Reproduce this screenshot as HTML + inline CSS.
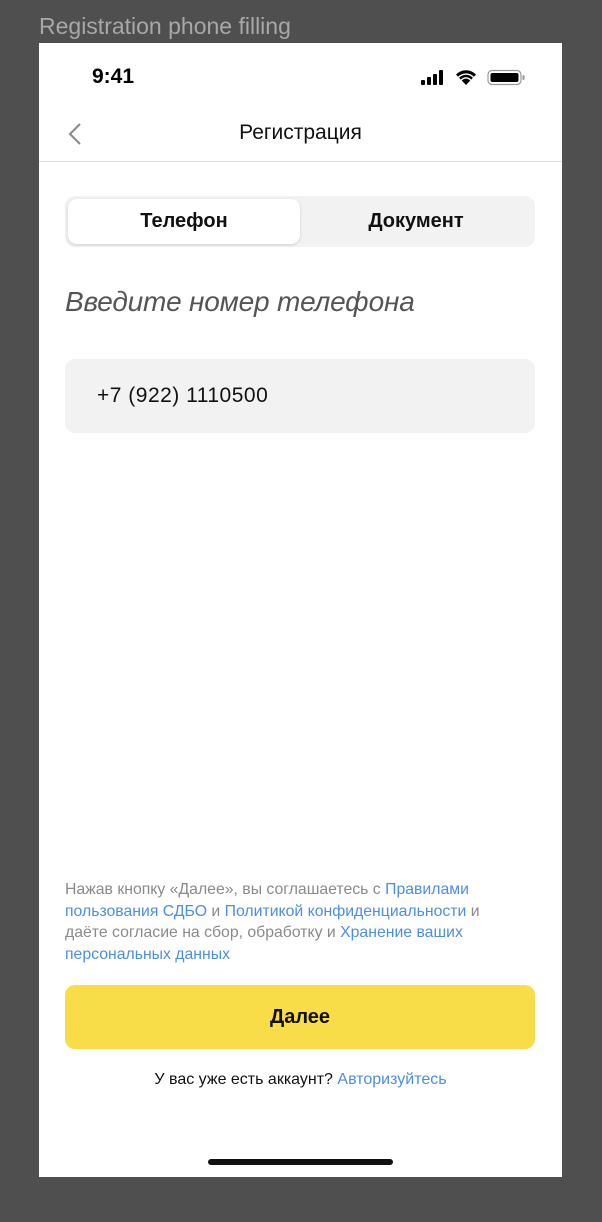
<!DOCTYPE html>
<html><head><meta charset="utf-8"><style>
*{margin:0;padding:0;box-sizing:border-box}
body{width:602px;height:1222px;background:#4f4f4f;position:relative;font-family:"Liberation Sans","DejaVu Sans",sans-serif;overflow:hidden}
.abs{position:absolute}
.title{left:39px;top:13px;color:#a8a8a8;font-size:23px}
.phone{left:39px;top:43px;width:523px;height:1134px;background:#fff}
.time{left:53px;top:22px;font-size:21px;font-weight:bold;color:#000}
.hdr{left:0;width:523px;top:78px;text-align:center;font-size:21px;color:#111}
.line{left:0;top:118px;width:523px;height:1px;background:#ddd}
.seg{left:26px;top:153px;width:470px;height:51px;background:#f2f2f2;border-radius:10px}
.seg .on{position:absolute;left:3px;top:3px;width:232px;height:45px;background:#fff;border-radius:9px;box-shadow:0 1px 3px rgba(0,0,0,.15)}
.seg span{position:absolute;top:14px;font-size:20px;font-weight:bold;color:#111;width:232px;text-align:center}
.h1{left:26px;top:243px;font-size:28px;font-style:italic;color:#555;letter-spacing:-0.2px}
.inp{left:26px;top:316px;width:470px;height:74px;background:#f2f2f2;border-radius:10px;font-size:21px;color:#111;padding:25px 0 0 32px;letter-spacing:0.5px}
.legal{left:26px;top:836px;width:480px;font-size:15.8px;line-height:21.5px;color:#8a8a8a;white-space:nowrap}
.legal a{color:#4a8ee8;text-decoration:none}
.btn{left:26px;top:942px;width:470px;height:64px;background:#f8dc48;border-radius:10px;text-align:center;font-size:20px;font-weight:bold;line-height:64px;color:#111}
.acc{left:0;width:523px;top:1028px;text-align:center;font-size:16px;color:#111}
.acc a{color:#4a8ee8}
.home{left:169px;top:1116px;width:185px;height:6px;background:#111;border-radius:3px}
</style></head><body>
<div class="abs title">Registration phone filling</div>
<div class="abs phone">
<div class="abs time">9:41</div>
<svg class="abs" style="left:382px;top:26px" width="105" height="18" viewBox="0 0 105 18">
<rect x="0" y="11" width="4" height="5" rx="1" fill="#000"/><rect x="6" y="8" width="4" height="8" rx="1" fill="#000"/><rect x="12" y="5" width="4" height="11" rx="1" fill="#000"/><rect x="18" y="1" width="4" height="15" rx="1" fill="#000"/>
<path d="M35 5.5a14 14 0 0 1 20 0L45 16Z" fill="#000"/>
<path d="M37.6 8.3a10 10 0 0 1 14.8 0M40.3 11.2a6 6 0 0 1 9.4 0" stroke="#fff" stroke-width="1.4" fill="none"/>
<rect x="67" y="1.5" width="33" height="14" rx="4" fill="none" stroke="#999" stroke-width="1.2"/><rect x="69.5" y="4" width="28" height="9" rx="2" fill="#000"/><rect x="101.5" y="6" width="2" height="5" rx="1" fill="#999"/>
</svg>
<svg class="abs" style="left:28px;top:79px" width="16" height="24"><path d="M13 2 L3 12 L13 22" stroke="#888" stroke-width="2" fill="none"/></svg>
<div class="abs hdr">Регистрация</div>
<div class="abs line"></div>
<div class="abs seg"><div class="on"></div><span style="left:3px">Телефон</span><span style="left:235px">Документ</span></div>
<div class="abs h1">Введите номер телефона</div>
<div class="abs inp">+7 (922) 1110500</div>
<div class="abs legal">Нажав кнопку «Далее», вы соглашаетесь с <a>Правилами</a><br><a>пользования СДБО</a> и <a>Политикой конфиденциальности</a> и<br>даёте согласие на сбор, обработку и <a>Хранение ваших</a><br><a>персональных данных</a></div>
<div class="abs btn">Далее</div>
<div class="abs acc">У вас уже есть аккаунт? <a>Авторизуйтесь</a></div>
<div class="abs home"></div>
</div>
</body></html>
